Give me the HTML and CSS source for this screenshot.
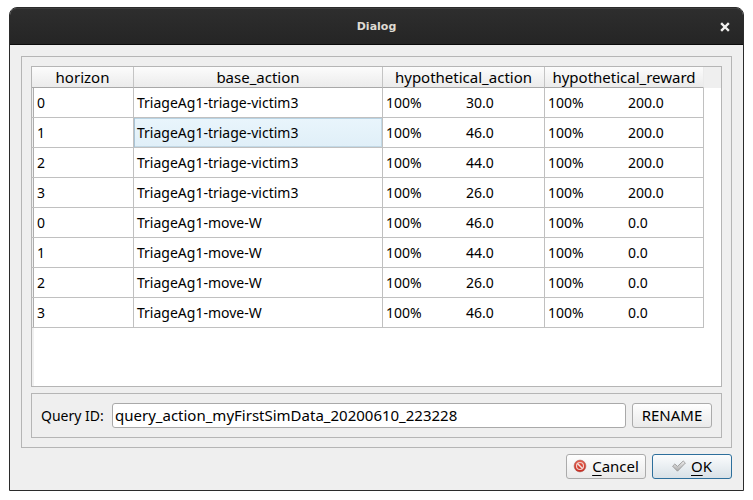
FILE: index.html
```html
<!DOCTYPE html>
<html lang="en">
<head>
<meta charset="utf-8">
<title>Dialog</title>
<link rel="stylesheet" href="styles.css">
</head>
<body>
<div class="window" role="dialog" aria-labelledby="title">
  <header class="titlebar">
    <h1 id="title">Dialog</h1>
    <button class="close" type="button" aria-label="Close">
      <svg width="10" height="10" viewBox="0 0 10 10"><path d="M2 2l6 6M8 2l-6 6" stroke="#f2f1ef" stroke-width="2.4" stroke-linecap="square"/></svg>
    </button>
  </header>
  <main class="content">
    <section class="group">
      <div class="table-view">
        <table>
          <colgroup><col class="col-horizon"><col><col class="col-action"><col class="col-reward"><col class="col-spare"></colgroup>
          <thead>
            <tr><th>horizon</th><th>base_action</th><th>hypothetical_action</th><th>hypothetical_reward</th><td class="spare"></td></tr>
          </thead>
          <tbody>
            <tr><td>0</td><td>TriageAg1-triage-victim3</td><td><span class="pct">100%</span>30.0</td><td><span class="pct">100%</span>200.0</td></tr>
            <tr><td>1</td><td class="selected">TriageAg1-triage-victim3</td><td><span class="pct">100%</span>46.0</td><td><span class="pct">100%</span>200.0</td></tr>
            <tr><td>2</td><td>TriageAg1-triage-victim3</td><td><span class="pct">100%</span>44.0</td><td><span class="pct">100%</span>200.0</td></tr>
            <tr><td>3</td><td>TriageAg1-triage-victim3</td><td><span class="pct">100%</span>26.0</td><td><span class="pct">100%</span>200.0</td></tr>
            <tr><td>0</td><td>TriageAg1-move-W</td><td><span class="pct">100%</span>46.0</td><td><span class="pct">100%</span>0.0</td></tr>
            <tr><td>1</td><td>TriageAg1-move-W</td><td><span class="pct">100%</span>44.0</td><td><span class="pct">100%</span>0.0</td></tr>
            <tr><td>2</td><td>TriageAg1-move-W</td><td><span class="pct">100%</span>26.0</td><td><span class="pct">100%</span>0.0</td></tr>
            <tr><td>3</td><td>TriageAg1-move-W</td><td><span class="pct">100%</span>46.0</td><td><span class="pct">100%</span>0.0</td></tr>
          </tbody>
        </table>
      </div>
      <form class="query">
        <label for="query-id">Query ID:</label>
        <input id="query-id" type="text" value="query_action_myFirstSimData_20200610_223228">
        <button class="btn" type="button">RENAME</button>
      </form>
    </section>
    <footer class="actions">
      <button class="btn" type="button">
        <svg width="14" height="14" viewBox="0 0 14 14">
          <defs><linearGradient id="red" x2="0" y2="1"><stop stop-color="#e8604e"/><stop offset="1" stop-color="#c8281c"/></linearGradient></defs>
          <circle cx="7" cy="7" r="5.9" fill="url(#red)" stroke="#a9605a" stroke-width=".6"/>
          <circle cx="7" cy="7" r="3.5" fill="none" stroke="#efd0cb" stroke-width="1.2"/>
          <path d="M4.5 4.5l5 5" stroke="#f3e4e1" stroke-width="1.5"/>
        </svg>
        <span><u>C</u>ancel</span>
      </button>
      <button class="btn default" type="button">
        <svg width="14" height="14" viewBox="0 0 14 14">
          <defs><linearGradient id="grey" x2="0" y2="1"><stop stop-color="#eee"/><stop offset="1" stop-color="#aaa"/></linearGradient></defs>
          <path d="M.6 7.2l2.2-2.2 2.7 2.4 5.7-5.4 2.2 2-7.9 8.2z" fill="url(#grey)" stroke="#909090" stroke-width=".8" stroke-linejoin="round"/>
        </svg>
        <span><u>O</u>K</span>
      </button>
    </footer>
  </main>
</div>
</body>
</html>
```
FILE: styles.css
```css
* {
  box-sizing: border-box;
}

body {
  margin: 0;
  min-height: 100vh;
  padding: 7px 9px 9px;
  display: flex;
  background: #fff;
  color: #000;
  font: 14px/20px "Noto Sans", "Open Sans", sans-serif;
}

button,
input {
  font: inherit;
  color: inherit;
}

.window {
  flex: 1;
  min-width: 0;
  display: flex;
  flex-direction: column;
  background: #efefef;
  border: 1px solid #2b2b2b;
  border-radius: 8px 8px 0 0;
}

.titlebar {
  display: grid;
  grid-template-columns: 24px 1fr 24px;
  align-items: center;
  height: 37px;
  padding: 1px 6px 0;
  border-bottom: 1px solid #0c0c0c;
  border-radius: 7px 7px 0 0;
  background: linear-gradient(#2e2e2e, #252525);
  box-shadow: inset 0 1px #3c3c3c;
}

.titlebar h1 {
  grid-column: 2;
  margin: 0;
  text-align: center;
  color: #dfdbd2;
  font: bold 11px/16px "DejaVu Sans", sans-serif;
}

.close {
  display: grid;
  place-items: center;
  width: 24px;
  height: 24px;
  padding: 0;
  border: 0;
  background: none;
}

.content {
  flex: 1;
  display: flex;
  flex-direction: column;
  gap: 6px;
  padding: 11px;
}

.group {
  flex: 1;
  display: flex;
  flex-direction: column;
  gap: 6px;
  padding: 9px;
  border: 1px solid #b5b5b5;
}

.table-view {
  flex: 1;
  border: 1px solid #b5b5b5;
  background: linear-gradient(90deg, #f0f0f0 2px, #fff 2px);
}

table {
  width: 100%;
  table-layout: fixed;
  border-collapse: separate;
  border-spacing: 0;
}

.col-horizon {
  width: 102px;
}

.col-action {
  width: 162px;
}

.col-reward {
  width: 159px;
}

.col-spare {
  width: 17px;
}

th {
  height: 21px;
  padding: 0;
  border-right: 1px solid #c4c4c4;
  border-bottom: 1px solid #a8a8a8;
  background: linear-gradient(#fcfcfc, #ebebeb);
  font-size: 15px;
  font-weight: normal;
  white-space: nowrap;
}

th:nth-child(4) {
  border-right-color: #ebebeb;
}

.spare {
  padding: 0;
  background: #efefef;
}

tbody td {
  height: 30px;
  padding: 0 3px;
  border-right: 1px solid #c0c0c0;
  border-bottom: 1px solid #c0c0c0;
  background: #fff;
  white-space: nowrap;
}

tbody td:first-child {
  padding-left: 5px;
  background: linear-gradient(90deg, #f0f0f0 1px, #adadad 1px, #adadad 2px, #fff 2px);
}

tbody .selected {
  padding-left: 2px;
  border-left: 1px solid #a9c4d6;
  background: linear-gradient(#e9f5fc, #e0eff8);
  box-shadow: inset 0 1px #b9d3e3, inset -1px -1px #c3d9e6;
}

.pct {
  display: inline-block;
  width: 80px;
}

.query {
  display: flex;
  align-items: center;
  gap: 6px;
  padding: 9px;
  border: 1px solid #b5b5b5;
}

.query label {
  width: 65px;
  white-space: nowrap;
}

.query input {
  flex: 1;
  min-width: 0;
  height: 25px;
  padding: 0 2px 2px;
  border: 1px solid #a9a9a9;
  border-radius: 3px;
  background: #fff;
  font-size: 15px;
}

.btn {
  display: flex;
  align-items: center;
  justify-content: center;
  gap: 5px;
  width: 80px;
  height: 25px;
  padding: 0 0 2px;
  border: 1px solid #ababab;
  border-radius: 3px;
  background: linear-gradient(#fefefe, #eaeaea);
  font-size: 15px;
}

.btn.default {
  border-color: #2d6f9c;
  background: linear-gradient(#fbfcfd, #d8e1e7);
}

.btn u {
  text-underline-offset: 3px;
}

.actions {
  display: flex;
  justify-content: flex-end;
  gap: 6px;
}
```
